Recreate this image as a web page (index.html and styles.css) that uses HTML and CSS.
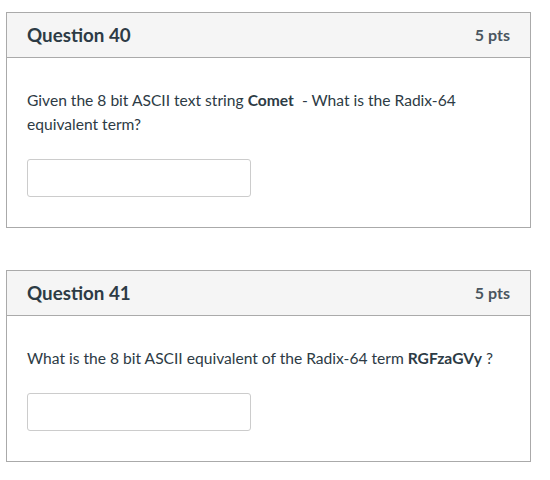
FILE: index.html
```html
<!DOCTYPE html>
<html>
<head>
<meta charset="utf-8">
<link rel="stylesheet" href="styles.css">
</head>
<body>
<div class="page">
  <div class="card">
    <div class="card-header">
      <span class="title">Question 40</span>
      <span class="pts">5 pts</span>
    </div>
    <div class="card-body">
      <p class="text narrow">Given the 8 bit ASCII text string <b class="gap">Comet</b> - What is the Radix-64 equivalent term?</p>
      <input class="answer" type="text">
    </div>
  </div>
  <div class="card">
    <div class="card-header">
      <span class="title">Question 41</span>
      <span class="pts">5 pts</span>
    </div>
    <div class="card-body">
      <p class="text">What is the 8 bit ASCII equivalent of the Radix-64 term <b>RGFzaGVy</b> ?</p>
      <input class="answer" type="text">
    </div>
  </div>
</div>
</body>
</html>
```
FILE: styles.css
```css
html, body {
  margin: 0;
  padding: 0;
  background: #fff;
}
body {
  font-family: Lato, "Open Sans", sans-serif;
  color: #2d3b45;
}
.page {
  padding: 12px 0 0 6px;
  display: flex;
  flex-direction: column;
  gap: 42px;
}
.card {
  width: 523px;
  border: 1px solid #aaaaaa;
}
.card-header {
  height: 45px;
  background: #f5f5f5;
  border-bottom: 1px solid #aaaaaa;
  display: flex;
  align-items: center;
  justify-content: space-between;
  padding: 0 20px 1px 20px;
  box-sizing: border-box;
}
.title {
  font-weight: bold;
  font-size: 18.8px;
}
.pts {
  font-weight: bold;
  font-size: 16px;
  color: #4a5560;
}
.card-body {
  padding: 30px 20px 30px 20px;
}
.text {
  margin: 0;
  font-size: 15.6px;
  line-height: 24px;
  white-space: nowrap;
}
.text.narrow {
  white-space: normal;
  width: 445px;
}
.text b {
  font-weight: bold;
}
.text .gap {
  margin-right: 4px;
}
.answer {
  display: block;
  margin-top: 23px;
  width: 224px;
  height: 38px;
  box-sizing: border-box;
  border: 1px solid #cccccc;
  border-radius: 3px;
  padding: 0 8px;
  font-family: Lato, sans-serif;
}
```
